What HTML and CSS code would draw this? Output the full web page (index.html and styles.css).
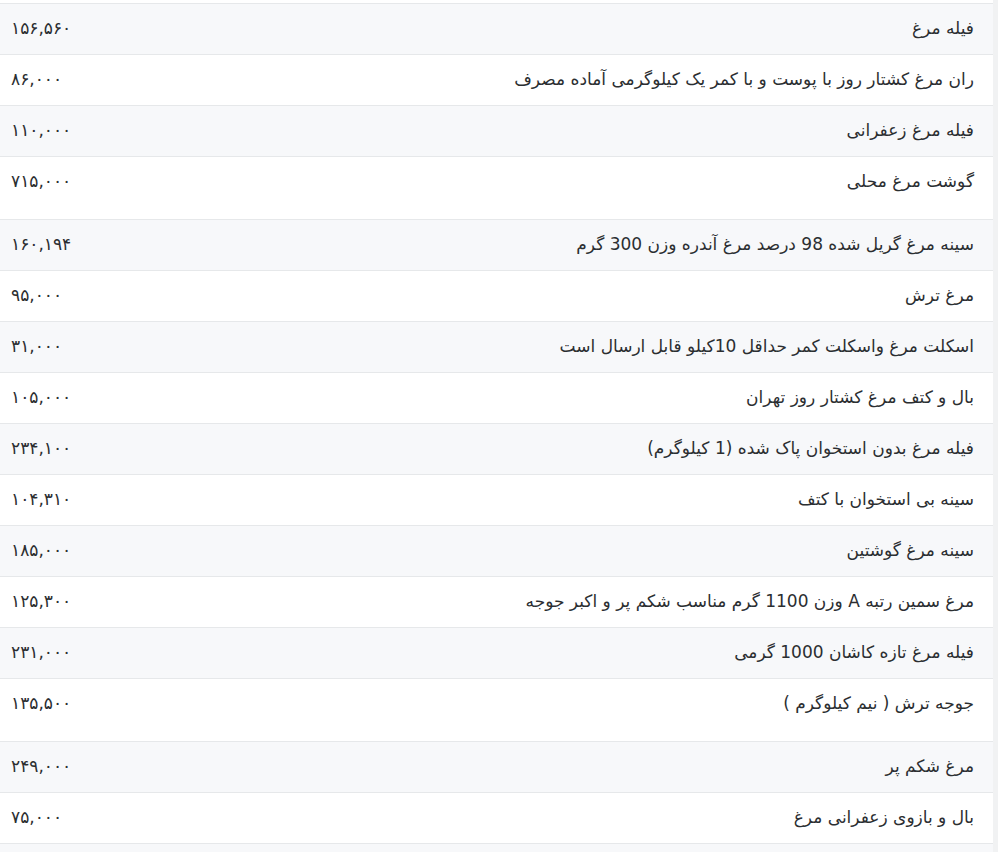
FILE: index.html
```html
<!DOCTYPE html>
<html lang="fa" dir="rtl">
<head>
<meta charset="utf-8">
<link rel="stylesheet" href="styles.css">
</head>
<body>
<div class="frame">
  <div class="gutter"></div>
  <table class="prices">
    <tbody>
      <tr><td class="name">فیله مرغ</td><td class="price">۱۵۶,۵۶۰</td></tr>
      <tr><td class="name">ران مرغ کشتار روز با پوست و با کمر یک کیلوگرمی آماده مصرف</td><td class="price">۸۶,۰۰۰</td></tr>
      <tr><td class="name">فیله مرغ زعفرانی</td><td class="price">۱۱۰,۰۰۰</td></tr>
      <tr class="tall"><td class="name">گوشت مرغ محلی</td><td class="price">۷۱۵,۰۰۰</td></tr>
      <tr><td class="name">سینه مرغ گریل شده 98 درصد مرغ آندره وزن 300 گرم</td><td class="price">۱۶۰,۱۹۴</td></tr>
      <tr><td class="name">مرغ ترش</td><td class="price">۹۵,۰۰۰</td></tr>
      <tr><td class="name">اسکلت مرغ واسکلت کمر حداقل 10کیلو قابل ارسال است</td><td class="price">۳۱,۰۰۰</td></tr>
      <tr><td class="name">بال و کتف مرغ کشتار روز تهران</td><td class="price">۱۰۵,۰۰۰</td></tr>
      <tr><td class="name">فیله مرغ بدون استخوان پاک شده (1 کیلوگرم)</td><td class="price">۲۳۴,۱۰۰</td></tr>
      <tr><td class="name">سینه بی استخوان با کتف</td><td class="price">۱۰۴,۳۱۰</td></tr>
      <tr><td class="name">سینه مرغ گوشتین</td><td class="price">۱۸۵,۰۰۰</td></tr>
      <tr><td class="name">مرغ سمین رتبه A وزن 1100 گرم مناسب شکم پر و اکبر جوجه</td><td class="price">۱۲۵,۳۰۰</td></tr>
      <tr><td class="name">فیله مرغ تازه کاشان 1000 گرمی</td><td class="price">۲۳۱,۰۰۰</td></tr>
      <tr class="tall"><td class="name">جوجه ترش ( نیم کیلوگرم )</td><td class="price">۱۳۵,۵۰۰</td></tr>
      <tr><td class="name">مرغ شکم پر</td><td class="price">۲۴۹,۰۰۰</td></tr>
      <tr><td class="name">بال و بازوی زعفرانی مرغ</td><td class="price">۷۵,۰۰۰</td></tr>
      <tr><td class="name">&nbsp;</td><td class="price">&nbsp;</td></tr>
    </tbody>
  </table>
</div>
</body>
</html>
```
FILE: styles.css
```css
html, body {
  margin: 0;
  padding: 0;
  background: #ffffff;
}
body {
  font-family: "DejaVu Sans", "Noto Sans", sans-serif;
  font-size: 17px;
  color: #2b2e31;
  overflow: hidden;
  height: 852px;
}
.frame {
  display: flex;
  flex-direction: row;
  padding-top: 3px;
}
.gutter {
  width: 5px;
  flex: none;
  background: #f1f2f3;
  margin-top: -3px;
}
.prices {
  flex: 1;
  border-collapse: collapse;
  direction: rtl;
}
.prices td {
  border-top: 1px solid #e6e8ea;
  padding: 12px 19px 14px 11px;
  line-height: 24px;
  height: 24px;
  vertical-align: top;
  white-space: nowrap;
}
.prices tr:nth-child(odd) td {
  background: #f7f8fa;
}
.prices tr.tall td {
  padding-bottom: 26px;
}
.name {
  text-align: right;
}
.price {
  text-align: left;
  width: 200px;
}
```
